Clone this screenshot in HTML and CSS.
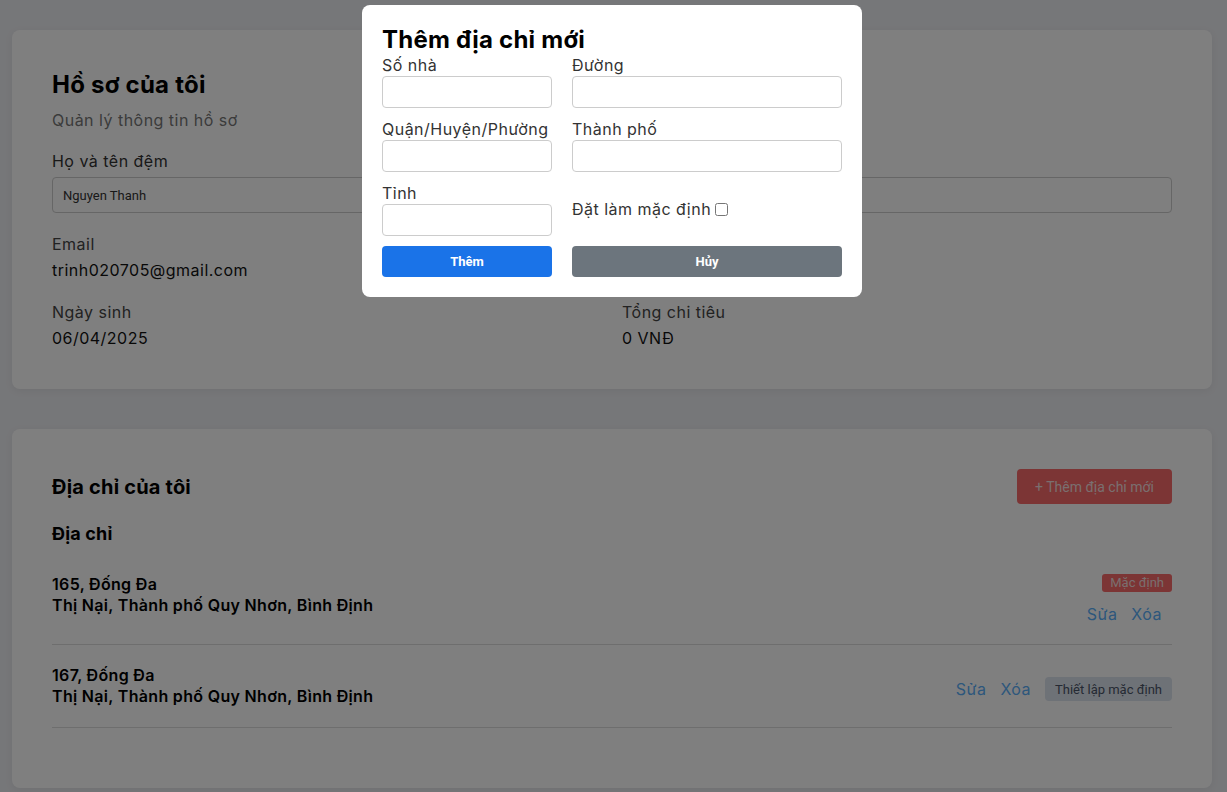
FILE: index.html
```html
<!DOCTYPE html>
<html lang="vi">
<head>
    <meta charset="UTF-8">
    <meta name="viewport" content="width=device-width, initial-scale=1.0">
    <title>Hồ sơ của tôi</title>
    <link rel="stylesheet" href="styles.css">
</head>
<body>

<main class="page">
    <section class="card">
        <h1 class="card-title">Hồ sơ của tôi</h1>
        <p class="subtitle">Quản lý thông tin hồ sơ</p>
        <div class="profile-grid">
            <div class="field">
                <label for="ho-ten">Họ và tên đệm</label>
                <input type="text" id="ho-ten" value="Nguyen Thanh">
            </div>
            <div class="field">
                <label for="ten">Tên</label>
                <input type="text" id="ten" value="Trinh">
            </div>
            <div class="info">
                <span class="info-label">Email</span>
                <span class="info-value">trinh020705@gmail.com</span>
            </div>
            <div class="info">
                <span class="info-label">Số điện thoại</span>
            </div>
            <div class="info">
                <span class="info-label">Ngày sinh</span>
                <span class="info-value">06/04/2025</span>
            </div>
            <div class="info">
                <span class="info-label">Tổng chi tiêu</span>
                <span class="info-value">0 VNĐ</span>
            </div>
        </div>
    </section>

    <section class="card">
        <div class="address-header">
            <h2 class="section-title">Địa chỉ của tôi</h2>
            <button type="button" class="btn-add">+ Thêm địa chỉ mới</button>
        </div>
        <h3 class="list-title">Địa chỉ</h3>
        <div class="address-list">
            <div class="address-item">
                <div class="address-text">
                    <div>165, Đống Đa</div>
                    <div>Thị Nại, Thành phố Quy Nhơn, Bình Định</div>
                </div>
                <div class="address-side">
                    <span class="badge">Mặc định</span>
                    <div class="address-actions">
                        <a href="#" class="link">Sửa</a>
                        <a href="#" class="link">Xóa</a>
                    </div>
                </div>
            </div>
            <div class="address-item">
                <div class="address-text">
                    <div>167, Đống Đa</div>
                    <div>Thị Nại, Thành phố Quy Nhơn, Bình Định</div>
                </div>
                <div class="address-side">
                    <div class="address-actions">
                        <a href="#" class="link">Sửa</a>
                        <a href="#" class="link">Xóa</a>
                        <button type="button" class="btn-default">Thiết lập mặc định</button>
                    </div>
                </div>
            </div>
        </div>
    </section>
</main>

<div class="overlay">
    <div class="modal">
        <h2 class="modal-title">Thêm địa chỉ mới</h2>
        <form class="modal-grid">
            <div class="modal-field">
                <label for="so-nha">Số nhà</label>
                <input type="text" id="so-nha">
            </div>
            <div class="modal-field">
                <label for="duong">Đường</label>
                <input type="text" id="duong">
            </div>
            <div class="modal-field">
                <label for="quan">Quận/Huyện/Phường</label>
                <input type="text" id="quan">
            </div>
            <div class="modal-field">
                <label for="thanh-pho">Thành phố</label>
                <input type="text" id="thanh-pho">
            </div>
            <div class="modal-field">
                <label for="tinh">Tỉnh</label>
                <input type="text" id="tinh">
            </div>
            <div class="modal-check">
                <label for="mac-dinh">Đặt làm mặc định</label>
                <input type="checkbox" id="mac-dinh">
            </div>
            <button type="button" class="btn btn-primary">Thêm</button>
            <button type="button" class="btn btn-secondary">Hủy</button>
        </form>
    </div>
</div>

</body>
</html>
```

FILE: styles.css
```css
body {
    margin: 0;
    font-family: Inter, "Noto Sans", sans-serif;
    letter-spacing: 0.03em;
    background-color: #edeef2;
    color: #222;
    overflow: hidden;
}
.page {
    margin: 30px 15px 30px 12px;
    display: flex;
    flex-direction: column;
    gap: 40px;
}
.card {
    background: #fff;
    border-radius: 8px;
    padding: 40px;
    box-shadow: 0 2px 8px rgba(0, 0, 0, 0.06);
}
.card-title {
    margin: 0;
    font-size: 24px;
    line-height: 30px;
    font-weight: 700;
    letter-spacing: 0.01em;
    color: #000;
}
.subtitle {
    margin: 9px 0 19px;
    font-size: 16px;
    line-height: 22px;
    color: #777;
}
.profile-grid {
    display: grid;
    grid-template-columns: 1fr 1fr;
    column-gap: 20px;
    row-gap: 20px;
}
.field label {
    display: block;
    font-size: 16px;
    line-height: 22px;
    color: #333;
    margin-bottom: 5px;
}
.field input {
    width: 100%;
    box-sizing: border-box;
    height: 36px;
    padding: 0 10px;
    border: 1px solid #ccc;
    border-radius: 4px;
    font-family: Roboto, "Liberation Sans", sans-serif;
    font-size: 13px;
    color: #333;
}
.info {
    display: flex;
    flex-direction: column;
    gap: 4px;
    font-size: 16px;
    line-height: 22px;
}
.info-label {
    color: #444;
}
.info-value {
    color: #111;
}
.address-header {
    display: flex;
    justify-content: space-between;
    align-items: center;
}
.section-title {
    margin: 0;
    font-size: 20px;
    font-weight: 700;
    letter-spacing: 0.01em;
    color: #000;
}
.btn-add {
    height: 35px;
    padding: 0 18px;
    border: none;
    border-radius: 4px;
    background-color: #f86a6a;
    color: #f4dede;
    font-family: Roboto, "Liberation Sans", sans-serif;
    font-size: 14px;
    letter-spacing: 0;
}
.list-title {
    margin: 18px 0 9px;
    font-size: 18px;
    line-height: 24px;
    font-weight: 700;
    letter-spacing: 0.01em;
    color: #000;
}
.address-list {
    margin-bottom: 20px;
}
.address-item {
    display: flex;
    justify-content: space-between;
    align-items: flex-start;
    padding: 20px 0;
    border-bottom: 1px solid #dcdcdc;
}
.address-item:first-child {
    padding-top: 19px;
}
.address-text {
    font-size: 16px;
    line-height: 21px;
    font-weight: 600;
    letter-spacing: 0.02em;
    color: #000;
}
.address-side {
    display: flex;
    flex-direction: column;
    align-items: flex-end;
}
.badge {
    display: inline-block;
    height: 18px;
    line-height: 18px;
    padding: 0 8px;
    border-radius: 3px;
    background-color: #f86a6a;
    color: #f4dede;
    font-family: Roboto, "Liberation Sans", sans-serif;
    font-size: 13px;
    letter-spacing: 0;
}
.address-actions {
    display: flex;
    align-items: center;
    gap: 4px;
    margin-top: 12px;
}
.link {
    margin-right: 10px;
    font-size: 16px;
    line-height: 20px;
    color: #5aaef8;
    text-decoration: none;
}
.btn-default {
    height: 24px;
    padding: 0 10px;
    border: none;
    border-radius: 4px;
    background-color: #dde4ee;
    color: #4a5568;
    font-family: Roboto, "Liberation Sans", sans-serif;
    font-size: 13px;
    letter-spacing: 0;
}

/* modal */
.overlay {
    position: fixed;
    inset: 0;
    background: rgba(0, 0, 0, 0.5);
    display: flex;
    justify-content: center;
    align-items: flex-start;
    padding: 5px 3px 0 0;
}
.modal {
    width: 500px;
    box-sizing: border-box;
    background: #fff;
    border-radius: 8px;
    padding: 20px;
}
.modal-title {
    margin: 0;
    font-size: 24px;
    line-height: 29px;
    font-weight: 700;
    letter-spacing: 0.01em;
    color: #000;
}
.modal-grid {
    display: grid;
    grid-template-columns: 170px 1fr;
    column-gap: 20px;
    row-gap: 10px;
}
.modal-field label {
    display: block;
    font-size: 16px;
    line-height: 22px;
    color: #333;
}
.modal-field input {
    width: 100%;
    box-sizing: border-box;
    height: 32px;
    border: 1px solid #ccc;
    border-radius: 4px;
}
.modal-check {
    align-self: center;
    display: flex;
    align-items: center;
    font-size: 16px;
    line-height: 22px;
    color: #333;
}
.modal-check input {
    margin: 0 0 0 4px;
    width: 13px;
    height: 13px;
}
.btn {
    height: 31px;
    border: none;
    border-radius: 4px;
    color: #fff;
    font-family: Roboto, "Liberation Sans", sans-serif;
    font-size: 13px;
    font-weight: 700;
    letter-spacing: 0;
}
.btn-primary {
    background-color: #1a73e8;
}
.btn-secondary {
    background-color: #6c757d;
}
```
